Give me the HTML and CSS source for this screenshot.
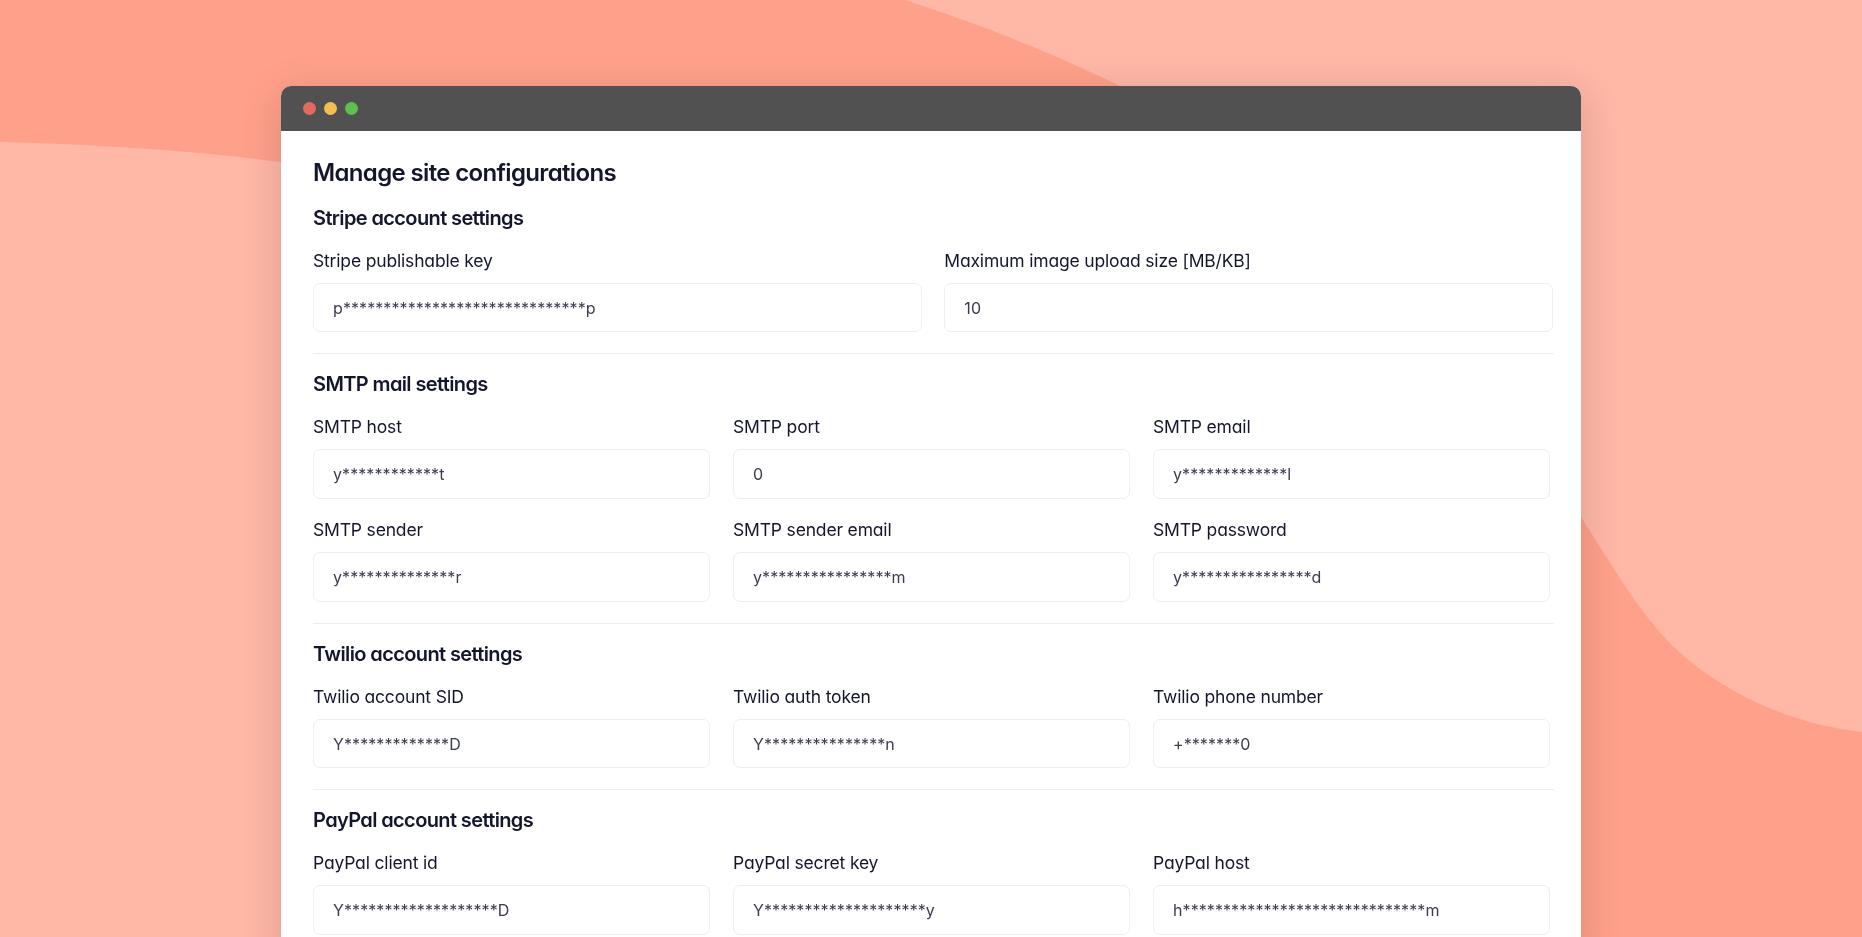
FILE: index.html
```html
<!DOCTYPE html>
<html lang="en">
<head>
    <meta charset="UTF-8">
    <meta name="viewport" content="width=device-width, initial-scale=1.0">
    <title>Manage site configurations</title>
    <link rel="stylesheet" href="styles.css">
</head>
<body>
    <svg class="backdrop" viewBox="0 0 1862 937" aria-hidden="true">
        <path class="wave" d="M0 0 H905 C980 24 1055 54 1120 86 C1300 180 1470 340 1581 517 C1610 562 1635 606 1667 640 C1700 675 1770 722 1862 732 V937 H1581 L281 162 C190 150 90 144 0 142 Z"/>
    </svg>

    <div class="window">
        <div class="title-bar">
            <span class="dot dot-red"></span>
            <span class="dot dot-yellow"></span>
            <span class="dot dot-green"></span>
        </div>

        <div class="content">
            <h1>Manage site configurations</h1>

            <section class="settings">
                <h2>Stripe account settings</h2>
                <div class="field-grid two-cols">
                    <div class="field">
                        <label>Stripe publishable key</label>
                        <input type="text" value="p******************************p">
                    </div>
                    <div class="field">
                        <label>Maximum image upload size [MB/KB]</label>
                        <input type="text" value="10">
                    </div>
                </div>
            </section>

            <section class="settings">
                <h2>SMTP mail settings</h2>
                <div class="field-grid three-cols">
                    <div class="field">
                        <label>SMTP host</label>
                        <input type="text" value="y************t">
                    </div>
                    <div class="field">
                        <label>SMTP port</label>
                        <input type="text" value="0">
                    </div>
                    <div class="field">
                        <label>SMTP email</label>
                        <input type="text" value="y*************l">
                    </div>
                    <div class="field">
                        <label>SMTP sender</label>
                        <input type="text" value="y**************r">
                    </div>
                    <div class="field">
                        <label>SMTP sender email</label>
                        <input type="text" value="y****************m">
                    </div>
                    <div class="field">
                        <label>SMTP password</label>
                        <input type="text" value="y****************d">
                    </div>
                </div>
            </section>

            <section class="settings">
                <h2>Twilio account settings</h2>
                <div class="field-grid three-cols">
                    <div class="field">
                        <label>Twilio account SID</label>
                        <input type="text" value="Y*************D">
                    </div>
                    <div class="field">
                        <label>Twilio auth token</label>
                        <input type="text" value="Y***************n">
                    </div>
                    <div class="field">
                        <label>Twilio phone number</label>
                        <input type="text" value="+*******0">
                    </div>
                </div>
            </section>

            <section class="settings">
                <h2>PayPal account settings</h2>
                <div class="field-grid three-cols">
                    <div class="field">
                        <label>PayPal client id</label>
                        <input type="text" value="Y*******************D">
                    </div>
                    <div class="field">
                        <label>PayPal secret key</label>
                        <input type="text" value="Y********************y">
                    </div>
                    <div class="field">
                        <label>PayPal host</label>
                        <input type="text" value="h******************************m">
                    </div>
                </div>
            </section>
        </div>
    </div>
</body>
</html>
```

FILE: styles.css
```css
* {
    margin: 0;
    padding: 0;
    box-sizing: border-box;
    font-family: Inter, "Noto Sans", sans-serif;
    font-feature-settings: "cv11" 1;
}

html, body {
    height: 100%;
    overflow: hidden;
}

body {
    background: #ffb7a6;
    padding-top: 86px;
    color: #14172b;
}

.backdrop {
    position: fixed;
    top: 0;
    left: 0;
    width: 100%;
    height: 100%;
    z-index: -1;
}

.wave {
    fill: #ffa08a;
}

.window {
    width: 1300px;
    margin: 0 auto;
    background: #fff;
    border-radius: 10px 10px 0 0;
    box-shadow: 0 8px 40px rgba(0, 0, 0, 0.15);
}

.title-bar {
    display: flex;
    align-items: center;
    gap: 8px;
    height: 44.5px;
    padding-left: 21.5px;
    background: #515151;
    border-radius: 10px 10px 0 0;
}

.dot {
    width: 13px;
    height: 13px;
    border-radius: 50%;
}

.dot-red { background: #e4695f; }
.dot-yellow { background: #f4bf52; }
.dot-green { background: #5fc04d; }

.content {
    padding: 27px 27px 0 32px;
}

h1 {
    font-size: 24px;
    font-weight: 600;
    line-height: 30px;
    letter-spacing: -0.65px;
    margin-bottom: 17px;
}

h2 {
    font-size: 20px;
    font-weight: 600;
    line-height: 26px;
    letter-spacing: -0.62px;
    margin-bottom: 18px;
}

.settings {
    padding-bottom: 21px;
    border-bottom: 1px solid #eeeeef;
    margin-bottom: 17px;
}

.field-grid {
    display: grid;
    row-gap: 19.5px;
}

.two-cols {
    grid-template-columns: repeat(2, 1fr);
    column-gap: 22.6px;
    padding-right: 1px;
}

.three-cols {
    grid-template-columns: repeat(3, 1fr);
    column-gap: 23px;
    padding-right: 4px;
}

label {
    display: block;
    font-size: 17.5px;
    font-weight: 400;
    line-height: 24px;
    letter-spacing: -0.17px;
    margin-bottom: 10px;
}

input {
    display: block;
    width: 100%;
    height: 49.5px;
    padding: 1px 19px 0;
    background: #fff;
    border: 1px solid #eeeeef;
    border-radius: 7px;
    font-size: 16px;
    letter-spacing: 0.08px;
    color: #3a3d4d;
    outline: none;
}
```
